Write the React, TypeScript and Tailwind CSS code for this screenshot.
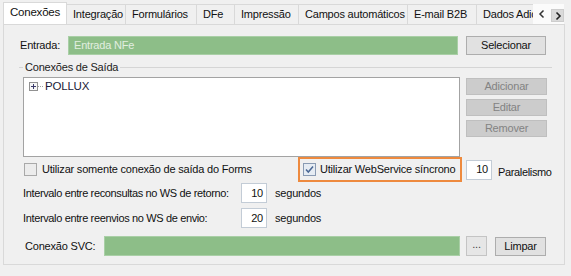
import React from "react";

function CheckBox({ checked }: { checked?: boolean }) {
  return (
    <svg width="13" height="13" viewBox="0 0 13 13" className="shrink-0">
      <rect x="0.5" y="0.5" width="12" height="12" fill={checked ? "#e6ecf3" : "#ececec"} stroke={checked ? "#8a9bb3" : "#a9a9a9"} />
      {checked && <path d="M3 6.5 L5.3 9 L10 3.5" fill="none" stroke="#4a6794" strokeWidth="1.5" />}
    </svg>
  );
}

const tabs: { label: string; w: string }[] = [
  { label: "Integração", w: "w-[59px]" },
  { label: "Formulários", w: "w-[71px]" },
  { label: "DFe", w: "w-[38px]" },
  { label: "Impressão", w: "w-[64px]" },
  { label: "Campos automáticos", w: "w-[109px]" },
  { label: "E-mail B2B", w: "w-[69px]" },
  { label: "Dados Adicionais", w: "w-[90px]" },
];

export default function App() {
  return (
    <div className="w-[571px] h-[276px] bg-[#f0f0f0] overflow-hidden font-['Liberation_Sans',Arial,sans-serif] text-[11px] tracking-[-0.2px] text-[#111]">
      {/* Tab strip */}
      <div className="flex h-[24px] pl-[3px]">
        <div className="flex w-[530px] overflow-hidden">
          <div className="relative z-10 mt-[2px] h-[23px] w-[64px] shrink-0 bg-white border border-b-0 border-[#d9d9d9] flex items-center justify-center pb-[2px] text-[11.5px]">
            Conexões
          </div>
          {tabs.map((t) => (
            <div
              key={t.label}
              className={`${t.w} mt-[4px] h-[20px] shrink-0 bg-[#f0f0f0] border-t border-r border-[#d9d9d9] flex items-center justify-start pl-[6px] whitespace-nowrap overflow-hidden`}
            >
              {t.label}
            </div>
          ))}
        </div>
        <div className="mt-[4px] h-[20px] w-[31px] bg-[#fbfbfb] flex items-center">
          <svg width="8" height="10" viewBox="0 0 8 10" className="ml-[5px] shrink-0">
            <path d="M5.5 1.5 L2 5 L5.5 8.5" fill="none" stroke="#333" strokeWidth="1.5" />
          </svg>
          <div className="ml-[5px] w-[14px] h-[13px] mt-[3px] bg-[#dadada] border border-[#cdcdcd] flex items-center justify-center">
            <svg width="8" height="10" viewBox="0 0 8 10">
              <path d="M2.5 1.5 L6 5 L2.5 8.5" fill="none" stroke="#222" strokeWidth="1.6" />
            </svg>
          </div>
        </div>
      </div>

      {/* Panel */}
      <div className="ml-[3px] w-[562px] h-[241px] border border-[#d9d9d9] bg-[#f0f0f0] flex flex-col">
        {/* Entrada */}
        <div className="mt-[11px] h-[19px] flex items-center">
          <div className="ml-[16px] w-[48px]">Entrada:</div>
          <div className="w-[390px] h-[19px] bg-[#8dbe88] border border-[#a9cfa6] flex items-center pl-[5px] text-[#e2eee0]">
            Entrada NFe
          </div>
          <button className="ml-[8px] w-[80px] h-[19px] bg-[#e1e1e1] border border-[#adadad] flex items-center justify-center">
            Selecionar
          </button>
        </div>

        {/* Group header */}
        <div className="mt-[6px] h-[13px] flex items-center">
          <div className="ml-[15px] w-[4px] h-px bg-[#d5d5d5]" />
          <div className="px-[2px] text-[#222]">Conexões de Saída</div>
          <div className="flex-1 mr-[12px] h-px bg-[#d5d5d5]" />
        </div>

        {/* Tree + buttons */}
        <div className="mt-[3px] flex">
          <div className="ml-[19px] w-[437px] h-[80px] bg-white border border-[#a3a3a3]">
            <div className="mt-[2px] ml-[5px] flex items-center h-[13px]">
              <svg width="9" height="9" viewBox="0 0 9 9" className="shrink-0">
                <rect x="0.5" y="0.5" width="8" height="8" fill="#f7f7f7" stroke="#919191" />
                <path d="M2 4.5 H7 M4.5 2 V7" stroke="#3b3b6b" strokeWidth="1" />
              </svg>
              <svg width="6" height="1" className="shrink-0">
                <path d="M0 0.5 H6" stroke="#a0a0a0" strokeDasharray="1 1" />
              </svg>
              <span className="ml-[1px] text-[#1b1b3a] text-[11.5px]">POLLUX</span>
            </div>
          </div>
          <div className="ml-[6px] mt-[1px] w-[81px] flex flex-col gap-[4px]">
            {["Adicionar", "Editar", "Remover"].map((b) => (
              <div key={b} className="h-[17px] bg-[#cccccc] border border-[#bfbfbf] flex items-center justify-center text-[#838383]">
                {b}
              </div>
            ))}
          </div>
        </div>

        {/* Checkboxes row */}
        <div className="h-[25px] flex items-center">
          <div className="ml-[20px] w-[274px] flex items-center">
            <CheckBox />
            <span className="ml-[5px]">Utilizar somente conexão de saída do Forms</span>
          </div>
          <div className="w-[164px] h-[25px] border-2 border-[#ee8a3e] flex items-center pl-[3px]">
            <CheckBox checked />
            <span className="ml-[4px] whitespace-nowrap">Utilizar WebService síncrono</span>
          </div>
          <div className="ml-[4px] w-[26px] h-[20px] bg-white border border-[#c3ccd6] flex items-center justify-end pr-[3px]">10</div>
          <div className="ml-[6px] mt-[5px] tracking-[-0.35px]">Paralelismo</div>
        </div>

        {/* Reconsultas */}
        <div className="mt-[1px] h-[20px] flex items-center">
          <div className="ml-[19px] w-[218px] tracking-[-0.36px]">Intervalo entre reconsultas no WS de retorno:</div>
          <div className="w-[26px] h-[20px] bg-white border border-[#c3ccd6] flex items-center justify-end pr-[3px]">10</div>
          <div className="ml-[8px]">segundos</div>
        </div>

        {/* Reenvios */}
        <div className="mt-[5px] h-[20px] flex items-center">
          <div className="ml-[19px] w-[218px] tracking-[-0.36px]">Intervalo entre reenvios no WS de envio:</div>
          <div className="w-[26px] h-[20px] bg-white border border-[#c3ccd6] flex items-center justify-end pr-[3px]">20</div>
          <div className="ml-[8px]">segundos</div>
        </div>

        {/* SVC */}
        <div className="mt-[8px] h-[20px] flex items-center">
          <div className="ml-[21px] w-[79px]">Conexão SVC:</div>
          <div className="w-[356px] h-[20px] bg-[#8dbe88] border border-[#a9cfa6]" />
          <button className="ml-[6px] w-[21px] h-[20px] bg-[#e6e6e6] border border-[#c4c4c4] flex items-end justify-center pb-[3px] text-[#444]">
            ...
          </button>
          <button className="ml-[8px] w-[51px] h-[19px] bg-[#e1e1e1] border border-[#adadad] flex items-center justify-center">
            Limpar
          </button>
        </div>
      </div>
    </div>
  );
}
